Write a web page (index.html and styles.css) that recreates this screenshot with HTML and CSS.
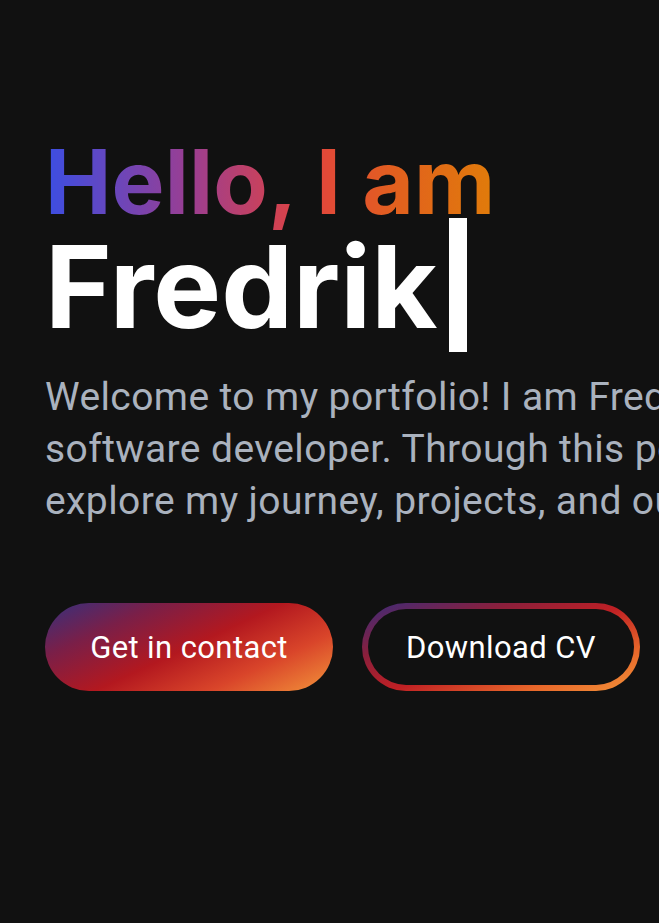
FILE: index.html
```html
<!DOCTYPE html>
<html lang="en">
<head>
<meta charset="utf-8">
<title>Fredrik</title>
<link rel="stylesheet" href="styles.css">
</head>
<body>
<main class="hero">
  <h1 class="title">
    <span class="greet">Hello, I am</span>
    <span class="name">Fredrik<span class="cursor"></span></span>
  </h1>
  <p class="intro">Welcome to my portfolio! I am Fredrik, a passionate software developer. Through this portfolio you can explore my journey, projects, and our collaboration.</p>
  <div class="actions">
    <a class="btn btn-fill" href="#">Get in contact</a>
    <a class="btn btn-outline" href="#">Download CV</a>
  </div>
</main>
</body>
</html>
```
FILE: styles.css
```css
html, body {
  margin: 0;
  padding: 0;
  background: #111111;
  overflow: hidden;
}
body {
  font-family: Inter, "Noto Sans", sans-serif;
  color: #fff;
}
.hero {
  width: 1100px;
  padding: 134px 0 0 45px;
  box-sizing: border-box;
}
.title {
  margin: 0;
  font-weight: 700;
}
.greet {
  display: block;
  width: max-content;
  font-size: 89px;
  line-height: 96px;
  letter-spacing: 0.1px;
  background: linear-gradient(90deg, #3b4ee3 0%, #9a3e92 32%, #e2433f 58%, #e2601e 78%, #e07c0a 100%);
  -webkit-background-clip: text;
  background-clip: text;
  color: transparent;
}
.name {
  display: block;
  font-size: 114px;
  line-height: 114px;
  letter-spacing: 0;
  color: #ffffff;
}
.cursor {
  display: inline-block;
  width: 18px;
  height: 134px;
  margin: -20px 0 -20px 12px;
  vertical-align: -4px;
  background: #ffffff;
}
.intro {
  width: 1000px;
  margin: 27px 0 0;
  font-family: Roboto, "Liberation Sans", sans-serif;
  font-size: 39px;
  letter-spacing: 0.4px;
  line-height: 52px;
  color: #aab2be;
  font-weight: 400;
}
.actions {
  display: flex;
  gap: 29px;
  margin-top: 76px;
}
.btn {
  display: inline-flex;
  align-items: center;
  justify-content: center;
  box-sizing: border-box;
  height: 88px;
  border-radius: 44px;
  font-family: Roboto, "Liberation Sans", sans-serif;
  font-size: 31px;
  letter-spacing: 0.4px;
  color: #ffffff;
  text-decoration: none;
}
.btn-fill {
  width: 288px;
  background: linear-gradient(155deg, #36307e 0%, #7a1f48 24%, #b3181f 50%, #d9452a 74%, #f3943a 100%);
}
.btn-outline {
  width: 278px;
  border: 6px solid transparent;
  background:
    linear-gradient(#111111, #111111) padding-box,
    linear-gradient(160deg, #3a2c7c 0%, #8a1f3c 28%, #c02024 52%, #e8672a 78%, #f3943a 100%) border-box;
}
```
